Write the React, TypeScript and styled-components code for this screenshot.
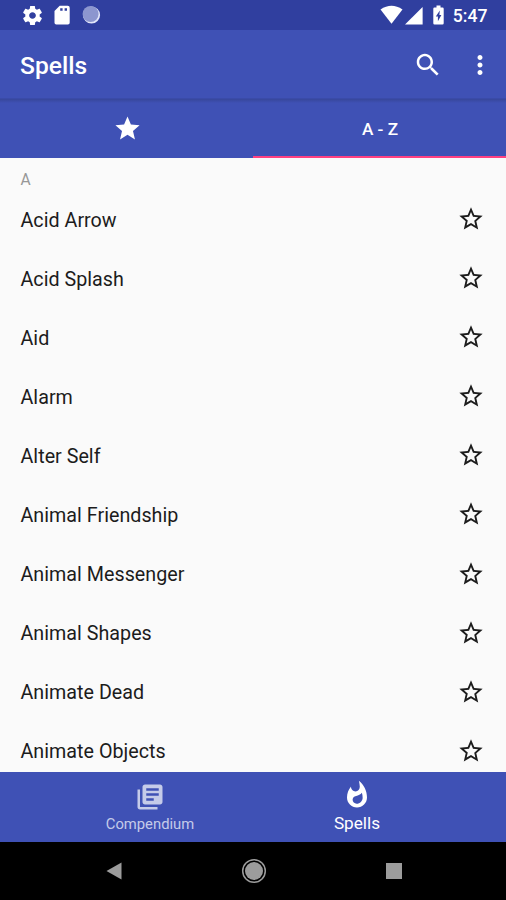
import React from "react";
import styled, { createGlobalStyle } from "styled-components";

const Global = createGlobalStyle`
  * { box-sizing: border-box; }
  html, body { margin: 0; padding: 0; background: #fafafa; }
  body { font-family: Roboto, sans-serif; overflow: hidden; }
`;

const Screen = styled.div`
  display: flex;
  flex-direction: column;
  width: 506px;
  height: 900px;
  background: #fafafa;
  overflow: hidden;
`;

const StatusBar = styled.header`
  display: flex;
  flex: none;
  align-items: center;
  justify-content: space-between;
  height: 30px;
  padding: 0 18.5px 0 21px;
  background: #303f9f;
  color: #fff;
`;

const StatusGroup = styled.div<{ $gap: number }>`
  display: flex;
  align-items: center;
  gap: ${(p) => p.$gap}px;
  height: 30px;
`;

const Clock = styled.span`
  margin-left: 2px;
  font-size: 17.6px;
  font-weight: 500;
  line-height: 30px;
  padding-top: 2px;
`;

const Toolbar = styled.div`
  display: flex;
  flex: none;
  align-items: center;
  height: 69px;
  padding: 1px 11px 0 20px;
  background: #3f51b5;
  border-bottom: 1px solid #3a4ba8;
  color: #fff;
`;

const Title = styled.h1`
  flex: 1;
  margin: 0;
  padding-top: 3px;
  font-size: 24.6px;
  font-weight: 500;
  line-height: 30px;
`;

const ToolButton = styled.button<{ $last?: boolean }>`
  display: flex;
  padding: 0;
  border: 0;
  background: none;
  color: inherit;
  margin-left: ${(p) => (p.$last ? 22 : 0)}px;
`;

const Tabs = styled.nav`
  display: flex;
  flex: none;
  height: 58.5px;
  background: linear-gradient(#37479b 0, #3f51b5 4px);
  color: #fff;
`;

const Tab = styled.div<{ $active?: boolean }>`
  display: flex;
  flex: 1;
  align-items: center;
  justify-content: center;
  padding: 3px 0 0 1px;
  border-bottom: 2px solid ${(p) => (p.$active ? "#ff4081" : "transparent")};
  font-size: 17.2px;
  font-weight: 500;
`;

const List = styled.main`
  flex: 1;
  min-height: 0;
  overflow: hidden;
`;

const Subheader = styled.div`
  height: 33px;
  padding: 10.5px 20.5px 0;
  font-size: 15.6px;
  line-height: 24px;
  color: #979797;
`;

const Row = styled.div`
  display: flex;
  align-items: center;
  justify-content: space-between;
  height: 59.04px;
  padding: 0 21px 0 20.5px;
  color: #1c1c1c;
  font-size: 19.7px;
`;

const RowName = styled.span`
  letter-spacing: 0.02px;
`;

const RowStar = styled.span`
  display: flex;
  padding-bottom: 1.4px;
`;

const BottomNav = styled.nav`
  display: flex;
  flex: none;
  justify-content: center;
  height: 70px;
  padding-left: 1px;
  background: #3f51b5;
`;

const NavItem = styled.div<{ $active?: boolean }>`
  display: flex;
  flex-direction: column;
  align-items: center;
  width: 207px;
  padding-top: ${(p) => (p.$active ? 8 : 10)}px;
  color: ${(p) => (p.$active ? "#fff" : "#c5cbe9")};
  font-size: ${(p) => (p.$active ? 17.2 : 14.8)}px;
`;

const NavLabel = styled.span<{ $active?: boolean }>`
  line-height: 24px;
  margin-top: ${(p) => (p.$active ? 1 : 0)}px;
`;

const SystemNav = styled.footer`
  display: grid;
  flex: none;
  grid-template-columns: repeat(3, 140px);
  justify-content: center;
  align-items: center;
  justify-items: center;
  height: 58px;
  padding-left: 1px;
  background: #000;
`;

const Glyph = styled.svg`
  display: block;
  flex: none;
  fill: currentColor;
`;

const paths = {
  gear: "M19.43 12.98c.04-.32.07-.64.07-.98s-.03-.66-.07-.98l2.11-1.65c.19-.15.24-.42.12-.64l-2-3.46c-.12-.22-.39-.3-.61-.22l-2.49 1c-.52-.4-1.08-.73-1.69-.98l-.38-2.65C14.46 2.18 14.25 2 14 2h-4c-.25 0-.46.18-.49.42l-.38 2.65c-.61.25-1.17.59-1.69.98l-2.49-1c-.23-.09-.49 0-.61.22l-2 3.46c-.13.22-.07.49.12.64l2.11 1.65c-.04.32-.07.65-.07.98s.03.66.07.98l-2.11 1.65c-.19.15-.24.42-.12.64l2 3.46c.12.22.39.3.61.22l2.49-1c.52.4 1.08.73 1.69.98l.38 2.65c.03.24.24.42.49.42h4c.25 0 .46-.18.49-.42l.38-2.65c.61-.25 1.17-.59 1.69-.98l2.49 1c.23.09.49 0 .61-.22l2-3.46c.12-.22.07-.49-.12-.64l-2.11-1.65zM12 15.5c-1.93 0-3.5-1.57-3.5-3.5s1.57-3.5 3.5-3.5 3.5 1.57 3.5 3.5-1.57 3.5-3.5 3.5z",
  search: "M15.5 14h-.79l-.28-.27C15.41 12.59 16 11.11 16 9.5 16 5.91 13.09 3 9.5 3S3 5.91 3 9.5 5.91 16 9.5 16c1.61 0 3.09-.59 4.23-1.57l.27.28v.79l5 4.99L20.49 19l-4.99-5zm-6 0C7.01 14 5 11.99 5 9.5S7.01 5 9.5 5 14 7.01 14 9.5 11.99 14 9.5 14z",
  more: "M12 8c1.1 0 2-.9 2-2s-.9-2-2-2-2 .9-2 2 .9 2 2 2zm0 2c-1.1 0-2 .9-2 2s.9 2 2 2 2-.9 2-2-.9-2-2-2zm0 6c-1.1 0-2 .9-2 2s.9 2 2 2 2-.9 2-2-.9-2-2-2z",
  star: "M12 17.27L18.18 21l-1.64-7.03L22 9.24l-7.19-.61L12 2 9.19 8.63 2 9.24l5.46 4.73L5.82 21z",
  starOutline: "M22 9.24l-7.19-.62L12 2 9.19 8.63 2 9.24l5.46 4.73L5.82 21 12 17.27 18.18 21l-1.63-7.03L22 9.24zM12 15.4l-3.76 2.27 1-4.28-3.32-2.88 4.38-.38L12 6.1l1.71 4.04 4.38.38-3.32 2.88 1 4.28L12 15.4z",
  library: "M4 6H2v14c0 1.1.9 2 2 2h14v-2H4V6zm16-4H8c-1.1 0-2 .9-2 2v12c0 1.1.9 2 2 2h12c1.1 0 2-.9 2-2V4c0-1.1-.9-2-2-2zm-1 9H9V9h10v2zm-4 4H9v-2h6v2zm4-8H9V5h10v2z",
  flame: "M13.5.67s.74 2.65.74 4.8c0 2.06-1.35 3.73-3.41 3.73-2.07 0-3.63-1.67-3.63-3.73l.03-.36C5.21 7.51 4 10.62 4 14c0 4.42 3.58 8 8 8s8-3.58 8-8C20 8.61 17.41 3.8 13.5.67zM11.71 19c-1.78 0-3.22-1.4-3.22-3.14 0-1.62 1.05-2.76 2.81-3.12 1.77-.36 3.6-1.21 4.62-2.58.39 1.29.59 2.65.59 4.04 0 2.65-2.15 4.8-4.8 4.8z",
};

const Icon = ({ name, size }: { name: keyof typeof paths; size: number }) => (
  <Glyph width={size} height={size} viewBox="0 0 24 24">
    <path d={paths[name]} />
  </Glyph>
);

const spells = [
  "Acid Arrow",
  "Acid Splash",
  "Aid",
  "Alarm",
  "Alter Self",
  "Animal Friendship",
  "Animal Messenger",
  "Animal Shapes",
  "Animate Dead",
  "Animate Objects",
];

export default function App() {
  return (
    <Screen>
      <Global />
      <StatusBar>
        <StatusGroup $gap={10}>
          <Icon name="gear" size={23} />
          <Glyph width="17" height="20" viewBox="0 0 17 20">
            <path
              fillRule="evenodd"
              d="M5.7.8H13.7Q15.7.8 15.7 2.8V17.7Q15.7 19.5 13.9 19.5H2.3Q.5 19.5.5 17.7V6ZM6.2 3.3V5.8H8.6V3.3ZM10.6 3.3V5.8H13V3.3Z"
            />
          </Glyph>
          <Glyph width="20" height="20" viewBox="0 0 20 20">
            <circle cx="10.5" cy="10" r="8.6" fill="#e3e7fa" />
            <circle cx="9.6" cy="9" r="8" fill="#8c96cf" />
          </Glyph>
        </StatusGroup>
        <StatusGroup $gap={0}>
          <Glyph width="71" height="30" viewBox="0 0 71 30">
            <path d="M.5 9.5Q11.5 2 22.5 9.5L11.5 23.8Z" />
            <path d="M25 24.6L42.6 7V24.6Z" />
            <path
              fillRule="evenodd"
              d="M56.5 5.6H60.5V7.5H62.5Q63.7 7.5 63.7 8.8V23.3Q63.7 24.6 62.5 24.6H54.5Q53.3 24.6 53.3 23.3V8.8Q53.3 7.5 54.5 7.5H56.5ZM59.8 10.5L55.8 16.6H57.9V21.3L61.4 15H59.4Z"
            />
          </Glyph>
          <Clock>5:47</Clock>
        </StatusGroup>
      </StatusBar>
      <Toolbar>
        <Title>Spells</Title>
        <ToolButton aria-label="Search">
          <Icon name="search" size={30} />
        </ToolButton>
        <ToolButton aria-label="More options" $last>
          <Icon name="more" size={30} />
        </ToolButton>
      </Toolbar>
      <Tabs>
        <Tab>
          <Icon name="star" size={29} />
        </Tab>
        <Tab $active>A - Z</Tab>
      </Tabs>
      <List>
        <Subheader>A</Subheader>
        {spells.map((name) => (
          <Row key={name}>
            <RowName>{name}</RowName>
            <RowStar>
              <Icon name="starOutline" size={28} />
            </RowStar>
          </Row>
        ))}
      </List>
      <BottomNav>
        <NavItem>
          <Icon name="library" size={30} />
          <NavLabel>Compendium</NavLabel>
        </NavItem>
        <NavItem $active>
          <Icon name="flame" size={30} />
          <NavLabel $active>Spells</NavLabel>
        </NavItem>
      </BottomNav>
      <SystemNav>
        <Glyph width="16" height="18" viewBox="0 0 16 18" color="#9c9c9c">
          <path d="M15.5.5V17.5L.5 9Z" />
        </Glyph>
        <Glyph width="26" height="26" viewBox="0 0 26 26" color="#9c9c9c">
          <circle cx="13" cy="13" r="11.3" fill="none" stroke="currentColor" strokeWidth="1.5" />
          <circle cx="13" cy="13" r="9" />
        </Glyph>
        <Glyph width="16" height="16" viewBox="0 0 16 16" color="#9c9c9c">
          <rect width="16" height="16" />
        </Glyph>
      </SystemNav>
    </Screen>
  );
}
